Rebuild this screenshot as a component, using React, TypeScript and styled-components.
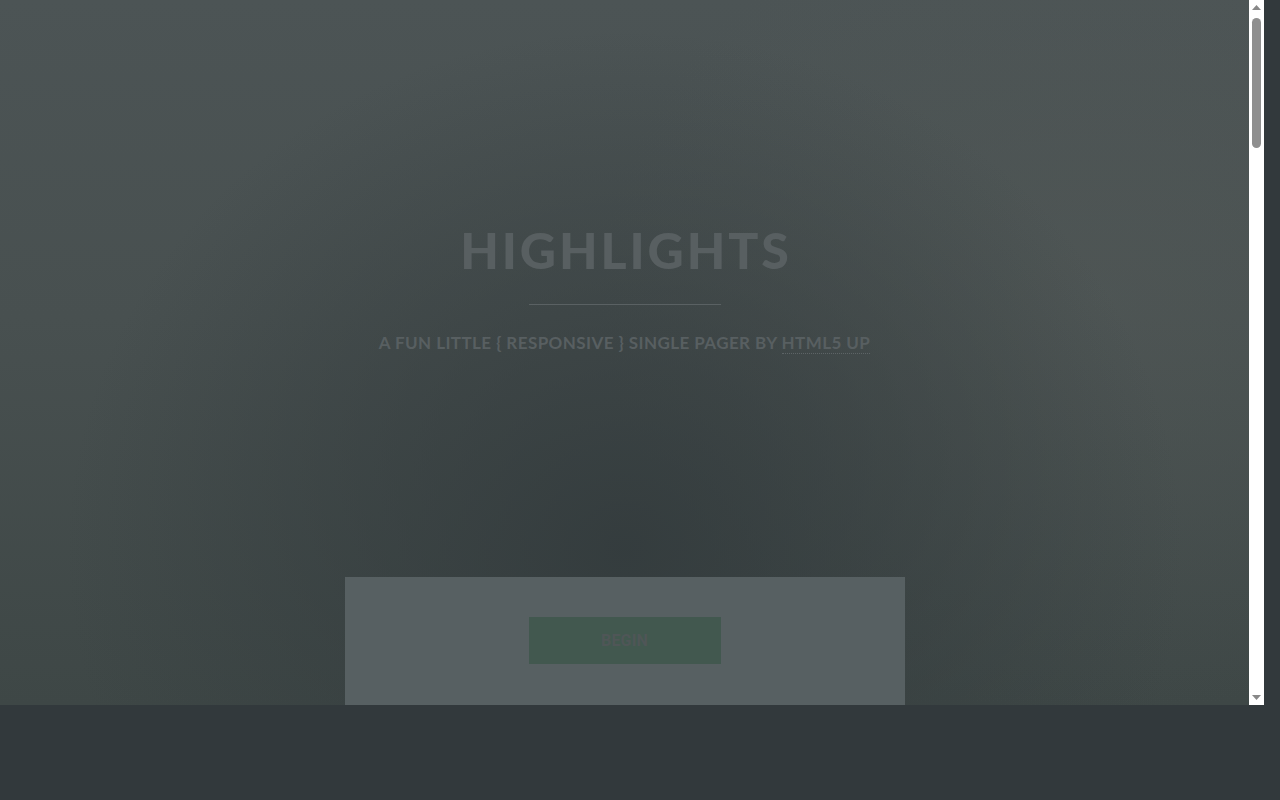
import React from "react";
import styled, { createGlobalStyle } from "styled-components";

const Global = createGlobalStyle`
  html, body { margin: 0; padding: 0; }
  body {
    background: #32393c;
    width: 1280px;
    height: 800px;
    overflow: hidden;
    font-family: Lato, "Open Sans", sans-serif;
  }
`;

const Frame = styled.div`
  display: flex;
  width: 1264px;
  height: 705px;
`;

const Viewport = styled.div`
  width: 1249px;
  height: 705px;
  overflow: hidden;
  flex: none;
`;

const ScrollBar = styled.div`
  width: 15px;
  height: 705px;
  background: #ffffff;
  display: flex;
  flex-direction: column;
  align-items: center;
  flex: none;
`;

const ArrowButton = styled.div`
  width: 15px;
  height: 15px;
  display: flex;
  align-items: center;
  justify-content: center;
  flex: none;
`;

const Track = styled.div`
  flex: 1;
  width: 15px;
  display: flex;
  justify-content: center;
  padding-top: 3px;
  box-sizing: border-box;
`;

const Thumb = styled.div`
  width: 9px;
  height: 130px;
  border-radius: 5px;
  background: #8f8f8f;
`;

const Arrow = ({ dir }: { dir: "up" | "down" }) => (
  <svg width="9" height="5" viewBox="0 0 9 5">
    {dir === "up" ? (
      <polygon points="0,5 4.5,0 9,5" fill="#888888" />
    ) : (
      <polygon points="0,0 9,0 4.5,5" fill="#888888" />
    )}
  </svg>
);

const Page = styled.div`
  height: 705px;
  background:
    radial-gradient(ellipse 560px 520px at 50% 78%, rgba(50, 58, 60, 0.85) 0%, rgba(50, 58, 60, 0) 100%),
    radial-gradient(ellipse 500px 420px at 88% 42%, rgba(86, 92, 90, 0.4) 0%, rgba(86, 92, 90, 0) 100%),
    linear-gradient(180deg, #4c5455 0%, #485050 45%, #3e4746 100%);
  background-repeat: no-repeat;
`;

const Header = styled.header`
  display: flex;
  flex-direction: column;
  align-items: center;
  padding-top: 222px;
  height: 577px;
  box-sizing: border-box;
`;

const Title = styled.h1`
  margin: 0;
  font-family: Lato, sans-serif;
  font-weight: 900;
  font-size: 50px;
  line-height: 56px;
  letter-spacing: 0.058em;
  padding-left: 0.058em;
  color: #585f61;
`;

const Rule = styled.hr`
  width: 192px;
  height: 1px;
  border: 0;
  margin: 26px 0 0;
  background: #5a6163;
`;

const Subtitle = styled.p`
  margin: 28px 0 0;
  font-family: Lato, sans-serif;
  font-weight: 700;
  font-size: 17px;
  line-height: 20px;
  letter-spacing: 0.025em;
  color: #585f61;
`;

const Credit = styled.a`
  color: inherit;
  text-decoration: none;
  border-bottom: 1px dotted #5d6466;
`;

const Panel = styled.section`
  width: 560px;
  margin: 0 auto;
  background: #576062;
  padding: 40px 0 0;
  height: 128px;
  box-sizing: border-box;
  display: flex;
  flex-direction: column;
  align-items: center;
`;

const Button = styled.a`
  display: flex;
  align-items: center;
  justify-content: center;
  width: 192px;
  height: 47px;
  background: #42584f;
  color: #4f5657;
  font-family: Roboto, "Open Sans", sans-serif;
  font-weight: 700;
  font-size: 16px;
  letter-spacing: 0.01em;
  text-decoration: none;
`;

export default function App() {
  return (
    <>
      <Global />
      <Frame>
        <Viewport>
          <Page>
            <Header>
              <Title>HIGHLIGHTS</Title>
              <Rule />
              <Subtitle>
                A FUN LITTLE {"{"} RESPONSIVE {"}"} SINGLE PAGER BY <Credit href="#">HTML5 UP</Credit>
              </Subtitle>
            </Header>
            <Panel>
              <Button href="#">BEGIN</Button>
            </Panel>
          </Page>
        </Viewport>
        <ScrollBar>
          <ArrowButton>
            <Arrow dir="up" />
          </ArrowButton>
          <Track>
            <Thumb />
          </Track>
          <ArrowButton>
            <Arrow dir="down" />
          </ArrowButton>
        </ScrollBar>
      </Frame>
    </>
  );
}
